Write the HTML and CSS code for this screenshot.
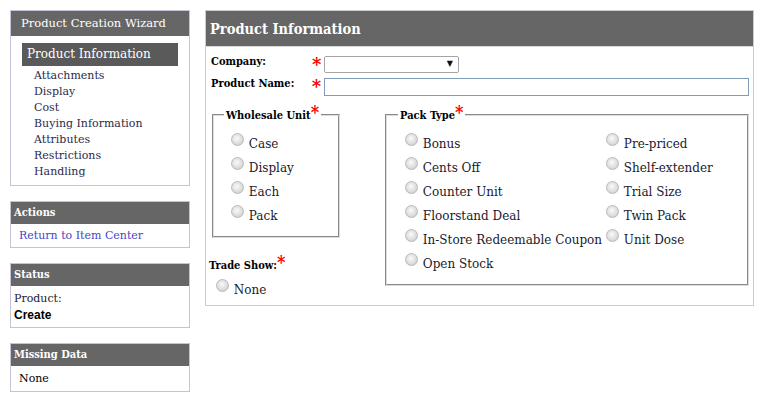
FILE: index.html
```html
<!DOCTYPE html>
<html lang="en">
<head>
  <meta charset="UTF-8">
  <title>Product Creation Wizard</title>
  <link rel="stylesheet" href="styles.css">
</head>
<body>
  <div class="page">
    <!-- left column -->
    <div class="sidebar">
      <div class="side-box">
        <div class="side-head big">Product Creation Wizard</div>
        <div class="side-body steps">
          <div class="step current">Product Information</div>
          <div class="step">Attachments</div>
          <div class="step">Display</div>
          <div class="step">Cost</div>
          <div class="step">Buying Information</div>
          <div class="step">Attributes</div>
          <div class="step">Restrictions</div>
          <div class="step">Handling</div>
        </div>
      </div>

      <div class="side-box">
        <div class="side-head">Actions</div>
        <div class="side-body"><a href="#" class="link">Return to Item Center</a></div>
      </div>

      <div class="side-box">
        <div class="side-head">Status</div>
        <div class="side-body status">
          <div>Product:</div>
          <div class="status-val">Create</div>
        </div>
      </div>

      <div class="side-box">
        <div class="side-head">Missing Data</div>
        <div class="side-body missing">None</div>
      </div>
    </div>

    <!-- main panel -->
    <div class="main">
      <div class="main-head">Product Information</div>
      <div class="main-body">
        <div class="field-row company">
          <label class="field-label">Company:</label>
          <span class="req">*</span>
          <div class="select-box"><span class="arrow">&#9660;</span></div>
        </div>
        <div class="field-row">
          <label class="field-label">Product Name:</label>
          <span class="req">*</span>
          <input type="text" class="text-input">
        </div>

        <div class="groups">
          <div class="left-groups">
            <fieldset class="wholesale">
              <legend>Wholesale Unit<span class="req">*</span></legend>
              <label class="opt"><input type="radio" name="wu"> Case</label>
              <label class="opt"><input type="radio" name="wu"> Display</label>
              <label class="opt"><input type="radio" name="wu"> Each</label>
              <label class="opt"><input type="radio" name="wu"> Pack</label>
            </fieldset>

            <div class="trade-show">
              <div class="field-label ts-label">Trade Show:<span class="req">*</span></div>
              <label class="opt"><input type="radio" name="ts"> None</label>
            </div>
          </div>

          <fieldset class="pack">
            <legend>Pack Type<span class="req">*</span></legend>
            <div class="pack-grid">
              <label class="opt"><input type="radio" name="pt"> Bonus</label>
              <label class="opt"><input type="radio" name="pt"> Pre-priced</label>
              <label class="opt"><input type="radio" name="pt"> Cents Off</label>
              <label class="opt"><input type="radio" name="pt"> Shelf-extender</label>
              <label class="opt"><input type="radio" name="pt"> Counter Unit</label>
              <label class="opt"><input type="radio" name="pt"> Trial Size</label>
              <label class="opt"><input type="radio" name="pt"> Floorstand Deal</label>
              <label class="opt"><input type="radio" name="pt"> Twin Pack</label>
              <label class="opt"><input type="radio" name="pt"> In-Store Redeemable Coupon</label>
              <label class="opt"><input type="radio" name="pt"> Unit Dose</label>
              <label class="opt"><input type="radio" name="pt"> Open Stock</label>
            </div>
          </fieldset>
        </div>
      </div>
    </div>
  </div>
</body>
</html>
```

FILE: styles.css
```css
body {
    margin: 0;
    padding: 10px 4px 4px 10px;
    font-family: "DejaVu Serif", "Liberation Serif", serif;
    font-size: 11px;
    color: #1a1a2e;
    background: #fff;
}

.page {
    display: flex;
    gap: 15px;
    align-items: flex-start;
}

/* sidebar */
.sidebar {
    width: 180px;
    display: flex;
    flex-direction: column;
    gap: 15px;
}

.side-box {
    border: 1px solid #c9c2d6;
}

.side-head {
    background: #666;
    color: #fff;
    font-weight: bold;
    height: 22px;
    line-height: 22px;
    padding: 0 3px;
    font-size: 11px;
    font-stretch: semi-condensed;
}

.side-head.big {
    height: 25px;
    line-height: 25px;
    padding: 0 10px;
    font-weight: normal;
    font-size: 11.5px;
    font-stretch: normal;
}

.side-body {
    padding: 4px 8px 3px 8px;
    line-height: 16px;
}

.steps {
    padding: 7px 11px 5px 11px;
}

.step {
    padding-left: 12px;
    line-height: 16px;
    color: #2b2b4a;
}

.step.current {
    background: #5a5a5a;
    color: #fff;
    padding-left: 5px;
    height: 23px;
    line-height: 23px;
    font-size: 12px;
    margin-bottom: 2px;
}

.link {
    color: #4646c8;
    text-decoration: none;
}

.status {
    padding: 5px 3px 4px 3px;
}

.status-val {
    font-family: "Liberation Sans", Arial, sans-serif;
    font-weight: bold;
    font-size: 12px;
    color: #000;
}

.missing {
    padding: 5px 8px 4px 8px;
    color: #000;
}

/* main panel */
.main {
    width: 547px;
    border: 1px solid #ccc;
}

.main-head {
    background: #666;
    color: #fff;
    font-weight: bold;
    font-size: 14.5px;
    font-stretch: condensed;
    height: 35px;
    line-height: 35px;
    padding: 0 4px;
    border-bottom: 1px solid #d8d8d8;
}

.main-body {
    padding: 5px 4px 3px 4px;
}

.field-row {
    display: flex;
    align-items: center;
    height: 22px;
    color: #000;
}

.field-label {
    font-weight: bold;
    color: #000;
    padding-left: 1px;
    font-stretch: semi-condensed;
}

.field-row .field-label {
    width: 101px;
    position: relative;
    top: -2px;
}

.req {
    color: #f00;
    font-weight: bold;
    font-size: 18px;
    line-height: 10px;
}

.field-row .req {
    width: 12px;
    position: relative;
    top: 2px;
}

.select-box {
    width: 133px;
    height: 15px;
    border: 1px solid #a5a5a5;
    border-radius: 2px;
    position: relative;
    top: 1px;
}

.arrow {
    position: absolute;
    right: 5px;
    top: 2px;
    font-size: 8px;
    color: #111;
}

.text-input {
    width: 424px;
    height: 16px;
    padding: 0;
    border: 1px solid #7f9db9;
    margin: 0;
    position: relative;
    top: 2px;
}

.groups {
    display: flex;
    gap: 45px;
    margin-top: 12px;
    align-items: flex-start;
}

fieldset {
    margin: 0;
    border: 2px groove #ddd;
    padding: 10px 10px 8px 17px;
}

legend {
    font-weight: bold;
    color: #000;
    padding: 0 2px;
    margin-left: -7px;
    white-space: nowrap;
    font-size: 11px;
    font-stretch: semi-condensed;
}

legend .req {
    font-size: 18px;
}

.wholesale {
    width: 128px;
    margin-left: 2px;
    box-sizing: border-box;
}

.opt {
    display: block;
    height: 24px;
    line-height: 24px;
    white-space: nowrap;
    font-size: 12px;
    color: #1a1a2e;
}

.opt input {
    appearance: none;
    width: 13px;
    height: 13px;
    margin: 0 1px 0 0;
    border: 1px solid #b9b9b9;
    border-radius: 50%;
    background: radial-gradient(circle at 45% 40%, #fafafa 0%, #d6d6d6 70%, #c4c4c4 100%);
    vertical-align: 2px;
}

.trade-show {
    margin-top: 20px;
}

.ts-label {
    line-height: 16px;
    margin-bottom: 4px;
    padding-left: 0;
    margin-left: -1px;
}

.trade-show .opt {
    padding-left: 6px;
}

.pack {
    width: 364px;
    box-sizing: border-box;
    padding: 10px 10px 8px 18px;
}

.pack-grid {
    display: grid;
    grid-template-columns: 201px 1fr;
}
```
